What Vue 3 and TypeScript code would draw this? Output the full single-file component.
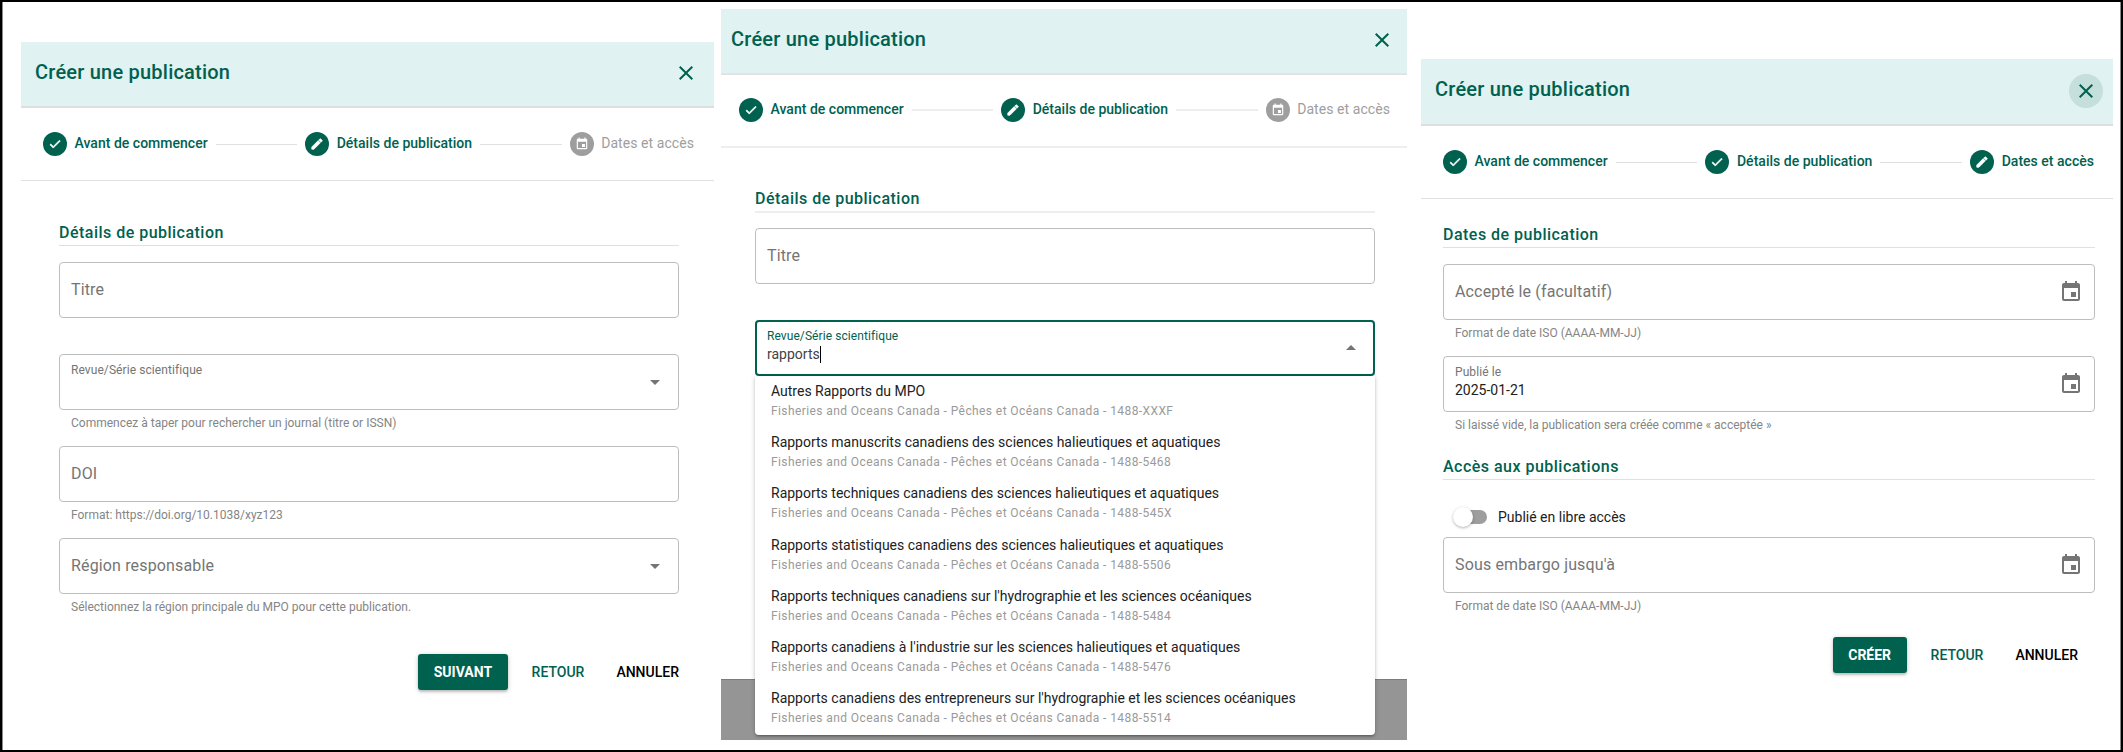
<script setup lang="ts">
type StepState = 'done' | 'edit' | 'idle'
type Field = {
  label: string
  hint?: string
  value?: string
  float?: boolean
  icon?: 'down' | 'up' | 'event'
  active?: boolean
}

const labels = ['Avant de commencer', 'Détails de publication', 'Dates et accès']
const panels: { id: string; states: StepState[] }[] = [
  { id: 'one', states: ['done', 'edit', 'idle'] },
  { id: 'two', states: ['done', 'edit', 'idle'] },
  { id: 'three', states: ['done', 'done', 'edit'] },
]

const icons = {
  done: 'M9 16.17L4.83 12l-1.42 1.41L9 19 21 7l-1.41-1.41z',
  edit: 'M3 17.25V21h3.75L17.81 9.94l-3.75-3.75L3 17.25zM20.71 7.04a.996.996 0 0 0 0-1.41l-2.34-2.34a.996.996 0 0 0-1.41 0l-1.83 1.83 3.75 3.75 1.83-1.83z',
  idle: 'M17 12h-5v5h5v-5zM16 1v2H8V1H6v2H5c-1.11 0-1.99.9-1.99 2L3 19a2 2 0 0 0 2 2h14c1.1 0 2-.9 2-2V5c0-1.1-.9-2-2-2h-1V1h-2zm3 18H5V8h14v11z',
  event: 'M17 12h-5v5h5v-5zM16 1v2H8V1H6v2H5c-1.11 0-1.99.9-1.99 2L3 19a2 2 0 0 0 2 2h14c1.1 0 2-.9 2-2V5c0-1.1-.9-2-2-2h-1V1h-2zm3 18H5V8h14v11z',
  down: 'M7 10l5 5 5-5z',
  up: 'M7 14l5-5 5 5z',
  close: 'M19 6.41L17.59 5 12 10.59 6.41 5 5 6.41 10.59 12 5 17.59 6.41 19 12 13.41 17.59 19 19 17.59 13.41 12z',
}

const fields: Record<string, Field[]> = {
  one: [
    { label: 'Titre' },
    { label: 'Revue/Série scientifique', float: true, icon: 'down', hint: 'Commencez à taper pour rechercher un journal (titre or ISSN)' },
    { label: 'DOI', hint: 'Format: https://doi.org/10.1038/xyz123' },
    { label: 'Région responsable', icon: 'down', hint: 'Sélectionnez la région principale du MPO pour cette publication.' },
  ],
  two: [
    { label: 'Titre' },
    { label: 'Revue/Série scientifique', float: true, icon: 'up', value: 'rapports', active: true },
  ],
  three: [
    { label: 'Accepté le (facultatif)', icon: 'event', hint: 'Format de date ISO (AAAA-MM-JJ)' },
    { label: 'Publié le', float: true, value: '2025-01-21', icon: 'event', hint: 'Si laissé vide, la publication sera créée comme « acceptée »' },
  ],
  access: [{ label: "Sous embargo jusqu'à", icon: 'event', hint: 'Format de date ISO (AAAA-MM-JJ)' }],
}

const groups: Record<string, string[]> = { one: ['one'], two: ['two'], three: ['three', 'access'] }
const titles: Record<string, string> = {
  one: 'Détails de publication',
  two: 'Détails de publication',
  three: 'Dates de publication',
  access: 'Accès aux publications',
}

const publisher = 'Fisheries and Oceans Canada - Pêches et Océans Canada - '
const journals = [
  ['Autres Rapports du MPO', '1488-XXXF'],
  ['Rapports manuscrits canadiens des sciences halieutiques et aquatiques', '1488-5468'],
  ['Rapports techniques canadiens des sciences halieutiques et aquatiques', '1488-545X'],
  ['Rapports statistiques canadiens des sciences halieutiques et aquatiques', '1488-5506'],
  ["Rapports techniques canadiens sur l'hydrographie et les sciences océaniques", '1488-5484'],
  ["Rapports canadiens à l'industrie sur les sciences halieutiques et aquatiques", '1488-5476'],
  ["Rapports canadiens des entrepreneurs sur l'hydrographie et les sciences océaniques", '1488-5514'],
]
</script>

<template>
  <main class="sheet">
    <section v-for="p in panels" :key="p.id" class="panel" :class="p.id">
      <header class="head">
        <h1>Créer une publication</h1>
        <button class="close" aria-label="Fermer">
          <svg viewBox="0 0 24 24"><path :d="icons.close" /></svg>
        </button>
      </header>
      <nav class="steps">
        <template v-for="(s, i) in p.states" :key="i">
          <span v-if="i > 0" class="line"></span>
          <span class="step" :class="s">
            <span class="dot"><svg viewBox="0 0 24 24"><path :d="icons[s]" /></svg></span>
            <span class="step-label">{{ labels[i] }}</span>
          </span>
        </template>
      </nav>
      <div class="body">
        <div v-for="g in groups[p.id]" :key="g" class="group" :class="'g-' + g">
          <h2>{{ titles[g] }}</h2>
          <div v-if="g === 'access'" class="toggle">
            <span class="track"><span class="thumb"></span></span>
            <span>Publié en libre accès</span>
          </div>
          <div v-for="f in fields[g]" :key="f.label" class="field">
            <div class="box" :class="{ active: f.active }">
              <div class="texts">
                <span :class="f.float ? 'float' : 'label'">{{ f.label }}</span>
                <span v-if="f.float" class="value">{{ f.value }}<i v-if="f.active" class="caret"></i></span>
              </div>
              <svg v-if="f.icon" viewBox="0 0 24 24"><path :d="icons[f.icon]" /></svg>
            </div>
            <div class="hint">{{ f.hint }}</div>
            <ul v-if="f.active" class="menu">
              <li v-for="j in journals" :key="j[1]">
                <span class="name">{{ j[0] }}</span>
                <span class="sub">{{ publisher }}{{ j[1] }}</span>
              </li>
            </ul>
          </div>
        </div>
      </div>
      <footer v-if="p.id !== 'two'" class="actions">
        <button class="btn main">{{ p.id === 'one' ? 'SUIVANT' : 'CRÉER' }}</button>
        <button class="btn back">RETOUR</button>
        <button class="btn">ANNULER</button>
      </footer>
      <div v-else class="backdrop"></div>
    </section>
  </main>
</template>

<style>
body { margin: 0; background: #fff; }
</style>

<style scoped>
* { box-sizing: border-box; }
.sheet {
  width: 2123px; height: 752px; border: 2px solid #000; background: #fff;
  box-shadow: inset 1px 0 #8a8a8a, inset -1px 0 #8a8a8a;
  display: flex; align-items: flex-start; overflow: hidden;
  font-family: Roboto, "Liberation Sans", sans-serif; color: #212121;
}
.panel { flex: none; display: flex; flex-direction: column; }
.one { width: 693px; margin: 40px 0 0 19px; }
.two { width: 686px; margin: 7px 0 0 7px; }
.three { width: 692px; margin: 57px 0 0 14px; }
.head {
  height: 66px; background: #e0f2f1; border-bottom: 2px solid #dcdfdf;
  display: flex; align-items: center; justify-content: space-between; padding: 0 11px 0 14px;
}
.three .head { height: 67px; padding-right: 10px; }
.two .head { padding: 0 8px 0 10px; border-bottom-color: #e0e4e4; }
h1 { margin: 0 0 4px; font-size: 20px; line-height: 32px; font-weight: 500; letter-spacing: .22px; color: #00614f; }
.two h1 { margin-bottom: 5px; }
.three h1 { margin-bottom: 6px; }
button { font-family: inherit; border: 0; background: none; padding: 0; margin: 0; }
.close { width: 34px; height: 34px; margin-bottom: 2px; border-radius: 50%; display: flex; align-items: center; justify-content: center; }
.two .close { margin-bottom: 3px; }
.three .close { background: #c5dfdc; margin-bottom: 1px; }
.close svg { width: 24px; height: 24px; fill: #00614f; }
.steps {
  height: 73px; border-bottom: 1px solid #e0e0e0; display: flex; align-items: center;
  padding: 0 20px 0 22px;
}
.three .steps { padding-right: 19px; }
.two .steps { height: 73px; padding: 0 17px 1px 18px; border-bottom: 2px solid #eee; }
.step { display: flex; align-items: center; gap: 7.5px; color: #00614f; font-size: 14px; font-weight: 500; white-space: nowrap; }
.step-label { line-height: 20px; margin-top: -2px; letter-spacing: .02px; }
.dot { width: 24px; height: 24px; border-radius: 50%; background: #00614f; display: flex; align-items: center; justify-content: center; }
.dot svg { width: 14px; height: 14px; fill: #fff; overflow: visible; }
.done .dot svg, .edit .dot svg { stroke: #fff; stroke-width: 1.2px; }
.idle { color: #9e9e9e; font-weight: 400; }
.idle .step-label { letter-spacing: .07px; }
.idle .dot { background: #9e9e9e; }
.line { flex: 1; height: 1px; background: #e0e0e0; margin: 0 8px; }
.two .line { height: 2px; background: #eee; }
.body { padding: 38px 35px 0 38px; }
.two .body { padding: 37px 32px 0 34px; }
.three .body { padding: 22px 18px 0 22px; }
h2 {
  margin: 0 0 16px; height: 27px; border-bottom: 1px solid #e0e0e0;
  font-size: 16px; line-height: 27px; font-weight: 500; letter-spacing: .48px; color: #00614f;
}
.two h2 { border-bottom: 2px solid #eee; height: 28px; margin-bottom: 15px; line-height: 28px; }
.field { position: relative; }
.box { height: 56px; border: 1px solid #bdbdbd; border-radius: 4px; display: flex; align-items: center; padding: 0 11px; }
.box svg { width: 24px; height: 24px; fill: #757575; }
.texts { flex: 1; display: flex; flex-direction: column; }
.label { font-size: 16px; line-height: 24px; letter-spacing: .15px; color: #757575; }
.float { font-size: 12px; line-height: 16px; color: #757575; margin-top: -4px; letter-spacing: .08px; }
.value { font-size: 14px; line-height: 20px; height: 20px; color: #212121; display: flex; align-items: center; }
.active { border: 2px solid #00614f; padding: 0 10px; }
.active .float { color: #00614f; }
.active .value { color: #424242; }
.caret { width: 1px; height: 17px; background: #000; }
.hint { height: 36px; padding: 5px 12px 0; font-size: 12px; line-height: 16px; color: #858585; }
.menu {
  position: absolute; z-index: 2; top: 56px; left: 0; right: 0; height: 359px; margin: 0; padding: 0 0 0 16px;
  list-style: none; background: #fff; border-radius: 0 0 4px 4px;
  box-shadow: 0 1px 5px rgba(0,0,0,.2), 0 2px 2px rgba(0,0,0,.14), 0 3px 1px -2px rgba(0,0,0,.12);
}
.menu li { height: 51.2px; padding-top: 5px; display: flex; flex-direction: column; white-space: nowrap; }
.name { font-size: 14px; line-height: 20px; color: #212121; }
.sub { font-size: 12px; line-height: 21px; letter-spacing: .41px; color: #9a9a9a; }
.backdrop { height: 61px; margin-top: 267px; background: #959595; border-top: 1px solid #7c7c7c; }
.g-access { margin-top: 5px; }
.g-access h2 { margin-bottom: 16px; }
.toggle { height: 41px; display: flex; align-items: center; padding-left: 14px; font-size: 14px; line-height: 20px; }
.track { width: 30px; height: 14px; border-radius: 7px; background: #9e9e9e; display: flex; align-items: center; margin-right: 11px; }
.thumb { width: 20px; height: 20px; border-radius: 50%; background: #fff; margin-left: -4px; box-shadow: 0 1px 3px rgba(0,0,0,.3); }
.actions { display: flex; justify-content: flex-end; gap: 8px; margin-top: 24px; padding-right: 23px; }
.three .actions { margin-top: 8px; }
.btn { height: 36px; padding: 0 12px 1px; border-radius: 3px; font-size: 14px; font-weight: 500; color: #000; }
.back { color: #00614f; }
.main { background: #00614f; color: #fff; font-weight: 700; padding: 0 15.5px 1px; margin-right: 4px; box-shadow: 0 1px 5px rgba(0,0,0,.2), 0 2px 2px rgba(0,0,0,.14); }
</style>
